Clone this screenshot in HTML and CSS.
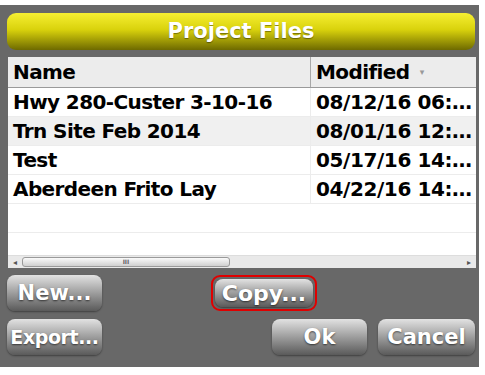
FILE: index.html
```html
<!DOCTYPE html>
<html>
  <head>
    <title>Project Files</title>
    <link rel="stylesheet" href="styles.css">
  </head>
  <body>
    <div class="panel">
      <div class="title">Project Files</div>
      <div class="files">
        <div class="list">
          <table>
            <tr class="head">
              <th class="name">Name</th>
              <th class="date">Modified <span class="sort">&#9662;</span></th>
            </tr>
            <tr><td class="name">Hwy 280-Custer 3-10-16</td><td class="date" title="08/12/16 06:52 PM">08/12/16 06:…</td></tr>
            <tr class="alt"><td class="name">Trn Site Feb 2014</td><td class="date" title="08/01/16 12:30 PM">08/01/16 12:…</td></tr>
            <tr><td class="name">Test</td><td class="date" title="05/17/16 14:12 PM">05/17/16 14:…</td></tr>
            <tr><td class="name">Aberdeen Frito Lay</td><td class="date" title="04/22/16 14:05 PM">04/22/16 14:…</td></tr>
            <tr><td></td><td></td></tr>
            <tr><td></td><td></td></tr>
          </table>
        </div>
        <div class="scroll">
          <span class="arrow">&#9666;</span>
          <div class="track"><div class="thumb">III</div></div>
          <span class="arrow">&#9656;</span>
        </div>
      </div>
      <div class="buttons">
        <div class="btn">New...</div>
        <div class="focus"><div class="btn">Copy...</div></div>
      </div>
      <div class="buttons">
        <div class="btn export">Export...</div>
        <div class="spacer"></div>
        <div class="btn ok">Ok</div>
        <div class="btn cancel">Cancel</div>
      </div>
    </div>
  </body>
</html>
```

FILE: styles.css
```css
body {
  margin: 0;
  background-color: #fff;
  font-family: "DejaVu Sans", sans-serif;
  font-weight: bold;
}
.panel {
  margin-top: 5px;
  width: 479px;
  height: 362px;
  box-sizing: border-box;
  padding: 8px 4px 0 7px;
  background-color: #686868;
}
.title {
  height: 37px;
  border-radius: 9px;
  background: linear-gradient(#f6ef32, #d9d20c 45%, #6e6a00);
  color: #fff;
  font-size: 21px;
  line-height: 37px;
  text-align: center;
  text-shadow: 0 1px 1px rgba(0, 0, 0, 0.4);
}
.files {
  margin: 7px 0 0 1px;
  width: 468px;
  height: 210px;
  background-color: #fff;
}
.list {
  height: 197px;
  overflow: hidden;
}
table {
  border-collapse: collapse;
  table-layout: fixed;
  width: 468px;
}
th, td {
  padding: 0 0 0 5px;
  height: 28px;
  font-size: 20px;
  letter-spacing: -0.6px;
  color: #000;
  text-align: left;
  white-space: nowrap;
  overflow: hidden;
  border-bottom: 1px solid #ececec;
}
td.name, th.name {
  width: 297px;
  border-right: 1px solid #ececec;
}
td.date {
  letter-spacing: -0.4px;
}
tr.head th {
  height: 30px;
  background-color: #ececec;
  border-bottom: 1px solid #9a9a9a;
}
tr.head th.name {
  border-right: 1px solid #a8a8a8;
}
tr.alt td {
  background-color: #f0f0f0;
}
.sort {
  font-size: 9px;
  color: #999;
  vertical-align: 4px;
  margin-left: 4px;
}
.scroll {
  display: flex;
  align-items: center;
  height: 12px;
  margin-top: 1px;
  background-color: #e9e9e9;
  border-top: 1px solid #ddd;
}
.arrow {
  width: 14px;
  font-size: 8px;
  color: #555;
  text-align: center;
}
.track {
  flex: 1;
  height: 10px;
}
.thumb {
  width: 208px;
  height: 10px;
  box-sizing: border-box;
  border: 1px solid #9a9a9a;
  border-radius: 3px;
  background: linear-gradient(#fafafa, #d0d0d0);
  font-size: 6px;
  line-height: 8px;
  color: #666;
  text-align: center;
}
.buttons {
  display: flex;
  align-items: center;
  margin-top: 8px;
  height: 36px;
}
.btn {
  width: 95px;
  height: 36px;
  box-sizing: border-box;
  border-radius: 8px;
  background: linear-gradient(#e2e2e2, #a4a4a4 45%, #5a5a5a);
  box-shadow: 0 1px 2px rgba(0, 0, 0, 0.4);
  color: #fff;
  font-size: 21px;
  line-height: 37px;
  text-align: center;
  text-shadow: 0 1px 2px rgba(0, 0, 0, 0.6);
  white-space: nowrap;
}
.focus {
  margin-left: 109px;
  padding: 2px;
  border: 2px solid #e00000;
  border-radius: 9px;
}
.focus .btn {
  width: 98px;
  height: 28px;
  line-height: 29px;
  font-size: 22px;
}
.btn.export {
  font-size: 19px;
  letter-spacing: -0.4px;
}
.spacer {
  flex: 1;
}
.cancel {
  margin-left: 11px;
  width: 97px;
}
```
